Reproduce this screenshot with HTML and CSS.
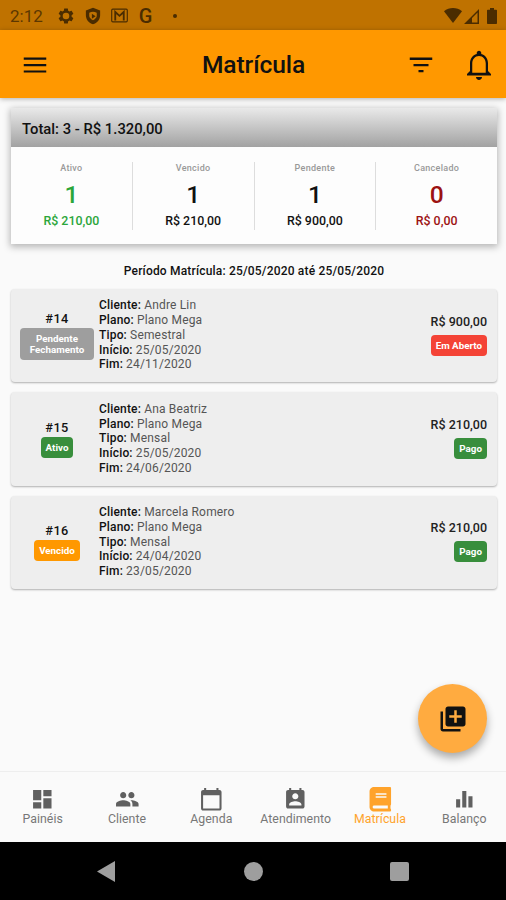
FILE: index.html
```html
<!DOCTYPE html>
<html lang="pt-BR">
<head>
<meta charset="UTF-8" />
<meta name="viewport" content="width=device-width, initial-scale=1" />
<title>Matrícula</title>
<link rel="stylesheet" href="styles.css">
</head>
<body>
<div class="app">
  <div class="status-bar">
    <span class="clock">2:12</span>
    <svg class="st-icon gear" viewBox="0 0 24 24"><path d="M19.43 12.98c.04-.32.07-.64.07-.98s-.03-.66-.07-.98l2.11-1.65c.19-.15.24-.42.12-.64l-2-3.46c-.12-.22-.39-.3-.61-.22l-2.49 1c-.52-.4-1.08-.73-1.69-.98l-.38-2.65C14.46 2.18 14.25 2 14 2h-4c-.25 0-.46.18-.49.42l-.38 2.65c-.61.25-1.17.59-1.69.98l-2.49-1c-.23-.09-.49 0-.61.22l-2 3.46c-.13.22-.07.49.12.64l2.11 1.65c-.04.32-.07.65-.07.98s.03.66.07.98l-2.11 1.65c-.19.15-.24.42-.12.64l2 3.46c.12.22.39.3.61.22l2.49-1c.52.4 1.08.73 1.69.98l.38 2.65c.03.24.24.42.49.42h4c.25 0 .46-.18.49-.42l.38-2.65c.61-.25 1.17-.59 1.69-.98l2.49 1c.23.09.49 0 .61-.22l2-3.46c.12-.22.07-.49-.12-.64l-2.11-1.65zM12 16.4a4.4 4.4 0 1 1 0-8.8 4.4 4.4 0 0 1 0 8.8z"/></svg>
    <svg class="st-icon shield" viewBox="0 0 24 24"><path fill-rule="evenodd" d="M12 1L2.500 4.600V11c0 5.500 4 10.700 9.500 12 5.500-1.300 9.500-6.500 9.500-12V4.600L12 1zM7 7.500q5-2.500 10 0V12c0 2-2.500 4.500-5 5.500-2.500-1-5-3.500-5-5.500zM10.500 9v6.500l5-3.200z"/></svg>
    <svg class="st-icon mail" viewBox="0 0 24 20"><rect x="1" y="1" width="22" height="18" rx="1.500" fill="none" stroke="currentColor" stroke-width="1.600"/><path d="M6 17V5l6 5.500L18 5v12" fill="none" stroke="currentColor" stroke-width="2.600"/></svg>
    <span class="g-logo">G</span>
    <span class="dot"></span>
    <div class="st-right">
      <svg class="wifi" viewBox="0 0 18 15"><path d="M0 3.200C5-1 13-1 18 3.200L9 15z"/></svg>
      <svg class="signal" viewBox="0 0 15 15"><path d="M0 15L15 0v15zM13.500 3.600L8 9.100v4.400h5.500z" fill-rule="evenodd"/></svg>
      <svg class="battery" viewBox="0 0 10 16"><path d="M3 0h4v1.700h2.200q.8 0 .8.800v12.700q0 .8-.8.800H.8q-.8 0-.8-.8V2.500q0-.8.800-.8H3z"/></svg>
    </div>
  </div>

  <header class="app-bar">
    <svg class="menu" viewBox="0 0 24 24"><path d="M3 18h18v-1.700H3V18zm0-5.100h18v-1.800H3v1.800zM3 6v1.700h18V6H3z"/></svg>
    <h1>Matrícula</h1>
    <svg class="filter" viewBox="0 0 24 24"><path d="M10 17.700h4V16h-4v1.700zM3 6v1.900h18V6H3zm3 6.900h12v-1.800H6v1.800z"/></svg>
    <svg class="bell" viewBox="0 0 24 24"><path d="M12 22c1.100 0 2-.9 2-2h-4c0 1.100.9 2 2 2zm6-6v-5c0-3.070-1.630-5.640-4.500-6.320V4c0-.83-.67-1.500-1.500-1.500s-1.500.67-1.500 1.500v.68C7.640 5.360 6 7.920 6 11v5l-2 2v1h16v-1l-2-2zm-1.500 1.200h-9V11c0-2.800 1.800-5 4.500-5s4.500 2.200 4.500 5v6.200z"/></svg>
  </header>

  <main>
    <section class="summary">
      <div class="summary-head">Total: 3 - R$ 1.320,00</div>
      <div class="stats">
        <div class="stat green"><small>Ativo</small><b>1</b><span>R$ 210,00</span></div>
        <div class="stat"><small>Vencido</small><b>1</b><span>R$ 210,00</span></div>
        <div class="stat"><small>Pendente</small><b>1</b><span>R$ 900,00</span></div>
        <div class="stat red"><small>Cancelado</small><b>0</b><span>R$ 0,00</span></div>
      </div>
    </section>

    <p class="period">Período Matrícula: 25/05/2020 até 25/05/2020</p>

    <div class="list">
      <article class="item">
        <div class="item-id"><strong>#14</strong><span class="tag gray">Pendente Fechamento</span></div>
        <div class="info">
          <p><b>Cliente:</b> Andre Lin</p>
          <p><b>Plano:</b> Plano Mega</p>
          <p><b>Tipo:</b> Semestral</p>
          <p><b>Início:</b> 25/05/2020</p>
          <p><b>Fim:</b> 24/11/2020</p>
        </div>
        <div class="price"><span>R$ 900,00</span><span class="tag open">Em Aberto</span></div>
      </article>
      <article class="item">
        <div class="item-id"><strong>#15</strong><span class="tag ok">Ativo</span></div>
        <div class="info">
          <p><b>Cliente:</b> Ana Beatriz</p>
          <p><b>Plano:</b> Plano Mega</p>
          <p><b>Tipo:</b> Mensal</p>
          <p><b>Início:</b> 25/05/2020</p>
          <p><b>Fim:</b> 24/06/2020</p>
        </div>
        <div class="price"><span>R$ 210,00</span><span class="tag ok">Pago</span></div>
      </article>
      <article class="item">
        <div class="item-id"><strong>#16</strong><span class="tag late">Vencido</span></div>
        <div class="info">
          <p><b>Cliente:</b> Marcela Romero</p>
          <p><b>Plano:</b> Plano Mega</p>
          <p><b>Tipo:</b> Mensal</p>
          <p><b>Início:</b> 24/04/2020</p>
          <p><b>Fim:</b> 23/05/2020</p>
        </div>
        <div class="price"><span>R$ 210,00</span><span class="tag ok">Pago</span></div>
      </article>
    </div>
  </main>

  <button class="fab" aria-label="Adicionar">
    <svg viewBox="0 0 24 24"><path d="M4 6H2v14c0 1.100.9 2 2 2h14v-2H4V6zm16-4H8c-1.100 0-2 .9-2 2v12c0 1.100.9 2 2 2h12c1.100 0 2-.9 2-2V4c0-1.100-.9-2-2-2zm-1 9h-4v4h-2v-4H9V9h4V5h2v4h4v2z"/></svg>
  </button>

  <nav class="tabs">
    <a class="tab"><svg viewBox="0 0 24 24"><path d="M3 13h8V3H3v10zm0 8h8v-6H3v6zm10 0h8V11h-8v10zm0-18v6h8V3h-8z"/></svg>Painéis</a>
    <a class="tab"><svg viewBox="0 0 24 24"><path d="M16 11c1.660 0 2.990-1.340 2.990-3S17.660 5 16 5s-3 1.340-3 3 1.340 3 3 3zm-8 0c1.660 0 2.990-1.340 2.990-3S9.660 5 8 5 5 6.340 5 8s1.340 3 3 3zm0 2c-2.330 0-7 1.170-7 3.500V19h14v-2.500c0-2.330-4.670-3.500-7-3.500zm8 0c-.29 0-.62.020-.97.050 1.160.84 1.970 1.970 1.970 3.450V19h6v-2.500c0-2.330-4.670-3.500-7-3.500z"/></svg>Cliente</a>
    <a class="tab"><svg viewBox="0 0 24 24"><path d="M20 3h-1V1h-2v2H7V1H5v2H4c-1.100 0-2 .9-2 2v16c0 1.100.9 2 2 2h16c1.100 0 2-.9 2-2V5c0-1.100-.9-2-2-2zm0 18H4V8h16v13z"/></svg>Agenda</a>
    <a class="tab"><svg viewBox="0 0 24 24"><path d="M19 3h-1V1h-2v2H8V1H6v2H5c-1.110 0-2 .9-2 2v14c0 1.100.89 2 2 2h14c1.100 0 2-.9 2-2V5c0-1.100-.9-2-2-2zm-7 3c1.660 0 3 1.340 3 3s-1.340 3-3 3-3-1.340-3-3 1.340-3 3-3zm6 12H6v-1c0-2 4-3.100 6-3.100s6 1.100 6 3.100v1z"/></svg>Atendimento</a>
    <a class="tab active"><svg viewBox="-32 0 512 512"><path d="M448 360V24c0-13.300-10.700-24-24-24H96C43 0 0 43 0 96v320c0 53 43 96 96 96h328c13.300 0 24-10.700 24-24v-16c0-7.500-3.500-14.300-8.900-18.700-4.200-15.400-4.200-59.300 0-74.700 5.400-4.300 8.900-11.100 8.900-18.600zM128 134c0-3.300 2.700-6 6-6h212c3.300 0 6 2.700 6 6v20c0 3.300-2.700 6-6 6H134c-3.300 0-6-2.700-6-6v-20zm0 64c0-3.300 2.700-6 6-6h212c3.300 0 6 2.700 6 6v20c0 3.300-2.700 6-6 6H134c-3.300 0-6-2.700-6-6v-20zm253.400 250H96c-17.700 0-32-14.300-32-32 0-17.600 14.400-32 32-32h285.400c-1.900 17.100-1.900 46.900 0 64z"/></svg>Matrícula</a>
    <a class="tab"><svg viewBox="0 0 24 24"><path d="M10 20h4V4h-4v16zm-6 0h4v-8H4v8zM16 9v11h4V9h-4z"/></svg>Balanço</a>
  </nav>

  <div class="system-nav">
    <svg viewBox="0 0 18 21"><path d="M0 10.500L18 0v21z"/></svg>
    <span class="home"></span>
    <span class="recent"></span>
  </div>
</div>
</body>
</html>
```
FILE: styles.css
```css
* {
  box-sizing: border-box;
}
body {
  margin: 0;
  font-family: Roboto, sans-serif;
  background: #fafafa;
  color: #111;
}
h1, p {
  margin: 0;
}
svg {
  display: block;
  fill: currentColor;
  flex: none;
}
.app {
  position: relative;
  display: flex;
  flex-direction: column;
  height: 900px;
  overflow: hidden;
}

/* Status bar */
.status-bar {
  display: flex;
  align-items: center;
  height: 30px;
  padding: 1px 9px 0 10px;
  background: #bf7200;
  color: #4a2c00;
}
.clock {
  width: 47px;
  font-size: 17px;
  color: #5c3700;
}
.st-icon {
  width: 18px;
  height: 18px;
  margin-right: 9px;
}
.mail {
  width: 17px;
  height: 15px;
}
.g-logo {
  width: 17px;
  font-size: 20px;
  font-weight: 500;
  text-align: center;
}
.dot {
  width: 4px;
  height: 4px;
  margin-left: 19px;
  border-radius: 50%;
  background: currentColor;
}
.st-right {
  display: flex;
  margin-left: auto;
}
.wifi {
  width: 18px;
  height: 15px;
}
.signal {
  width: 15px;
  height: 15px;
  margin: 1px 8px 0 2px;
}
.battery {
  width: 10px;
  height: 16px;
}

/* App bar */
.app-bar {
  display: flex;
  align-items: center;
  height: 68px;
  flex: none;
  padding: 1px 9px 0 20px;
  background: #ff9800;
  color: #111;
  box-shadow: 0 1px 5px rgba(0, 0, 0, 0.3);
}
.app-bar h1 {
  flex: 1;
  padding-left: 51px;
  font-size: 24.600px;
  font-weight: 500;
  letter-spacing: -0.1px;
  line-height: 30px;
  text-align: center;
}
.menu, .filter {
  width: 30px;
  height: 30px;
}
.bell {
  width: 36px;
  height: 36px;
  margin-left: 25px;
}

/* Content */
main {
  flex: 1;
  padding: 10px 9px 0 11px;
}
.summary {
  height: 136px;
  background: #fdfdfd;
  box-shadow: 0 2px 7px 1px rgba(0, 0, 0, 0.28);
}
.summary-head {
  height: 39px;
  padding-left: 11px;
  font-size: 14.800px;
  font-weight: 500;
  line-height: 42px;
  background: linear-gradient(#e9e9e9, #a2a2a2);
}
.stats {
  display: flex;
  padding-top: 15px;
}
.stat {
  flex: 1;
  display: flex;
  flex-direction: column;
  align-items: center;
  height: 68px;
  border-right: 1px solid #ddd;
}
.stat:last-child {
  border-right: none;
}
.stat small {
  font-size: 9px;
  font-weight: 500;
  line-height: 12px;
  letter-spacing: 0.3px;
  color: #999;
}
.stat b {
  font-size: 24.600px;
  font-weight: 500;
  line-height: 29px;
  margin-top: 6px;
}
.stat span {
  font-size: 12.400px;
  font-weight: 500;
  line-height: 14px;
  margin-top: 5px;
}
.stat.green {
  color: #2ba63a;
}
.stat.red {
  color: #9c1212;
}
.period {
  margin: 19px 0 10px;
  font-size: 12px;
  font-weight: 500;
  line-height: 16px;
  letter-spacing: 0.18px;
  text-align: center;
}
.list {
  display: flex;
  flex-direction: column;
  gap: 10px;
}
.item {
  display: flex;
  align-items: center;
  height: 93.400px;
  padding: 0 10px 1px 9px;
  border-radius: 4px;
  background: #eee;
  box-shadow: 0 1px 2px rgba(0, 0, 0, 0.3);
}
.item-id {
  display: flex;
  flex-direction: column;
  align-items: center;
  width: 74px;
  margin-right: 5px;
}
.item-id strong {
  font-size: 12.700px;
  font-weight: 500;
  line-height: 15px;
  letter-spacing: 0.4px;
  margin-bottom: 2px;
}
.tag {
  padding: 5px;
  border-radius: 4px;
  font-size: 9.800px;
  font-weight: 700;
  line-height: 11px;
  text-align: center;
  color: #fff;
}
.gray {
  background: #9e9e9e;
}
.ok {
  background: #388e3c;
}
.late {
  background: #ff9800;
}
.open {
  background: #f44336;
}
.info {
  flex: 1;
  font-size: 12px;
  line-height: 14.700px;
  letter-spacing: 0.17px;
  color: #555;
}
.info b {
  font-weight: 500;
  color: #111;
}
.price {
  display: flex;
  flex-direction: column;
  align-items: flex-end;
  gap: 6px;
  font-size: 12.500px;
  font-weight: 500;
  line-height: 14px;
  color: #222;
}

.fab {
  position: absolute;
  right: 19px;
  bottom: 147px;
  display: flex;
  align-items: center;
  justify-content: center;
  width: 69px;
  height: 69px;
  border: none;
  border-radius: 50%;
  background: #ffab40;
  color: #111;
  box-shadow: 0 5px 9px rgba(0, 0, 0, 0.32);
}
.fab svg {
  width: 30px;
  height: 30px;
}

/* Bottom navigation */
.tabs {
  display: flex;
  height: 71px;
  border-top: 1px solid #eee;
}
.tab {
  flex: 1;
  display: flex;
  flex-direction: column;
  align-items: center;
  padding: 15px 0 0 1px;
  font-size: 12.300px;
  line-height: 14px;
  letter-spacing: 0.05px;
  color: #777;
}
.tab svg {
  width: 24.600px;
  height: 24.600px;
  color: #606060;
}
.tab.active, .tab.active svg {
  color: #ffa32b;
}

.system-nav {
  display: flex;
  align-items: center;
  justify-content: space-between;
  height: 58px;
  padding: 0 97px;
  background: #000;
  color: #9e9e9e;
}
.system-nav svg {
  width: 18px;
  height: 21px;
}
.home, .recent {
  width: 19px;
  height: 19px;
  border-radius: 50%;
  background: currentColor;
}
.home {
  margin-left: 2px;
}
.recent {
  border-radius: 2px;
}
```
